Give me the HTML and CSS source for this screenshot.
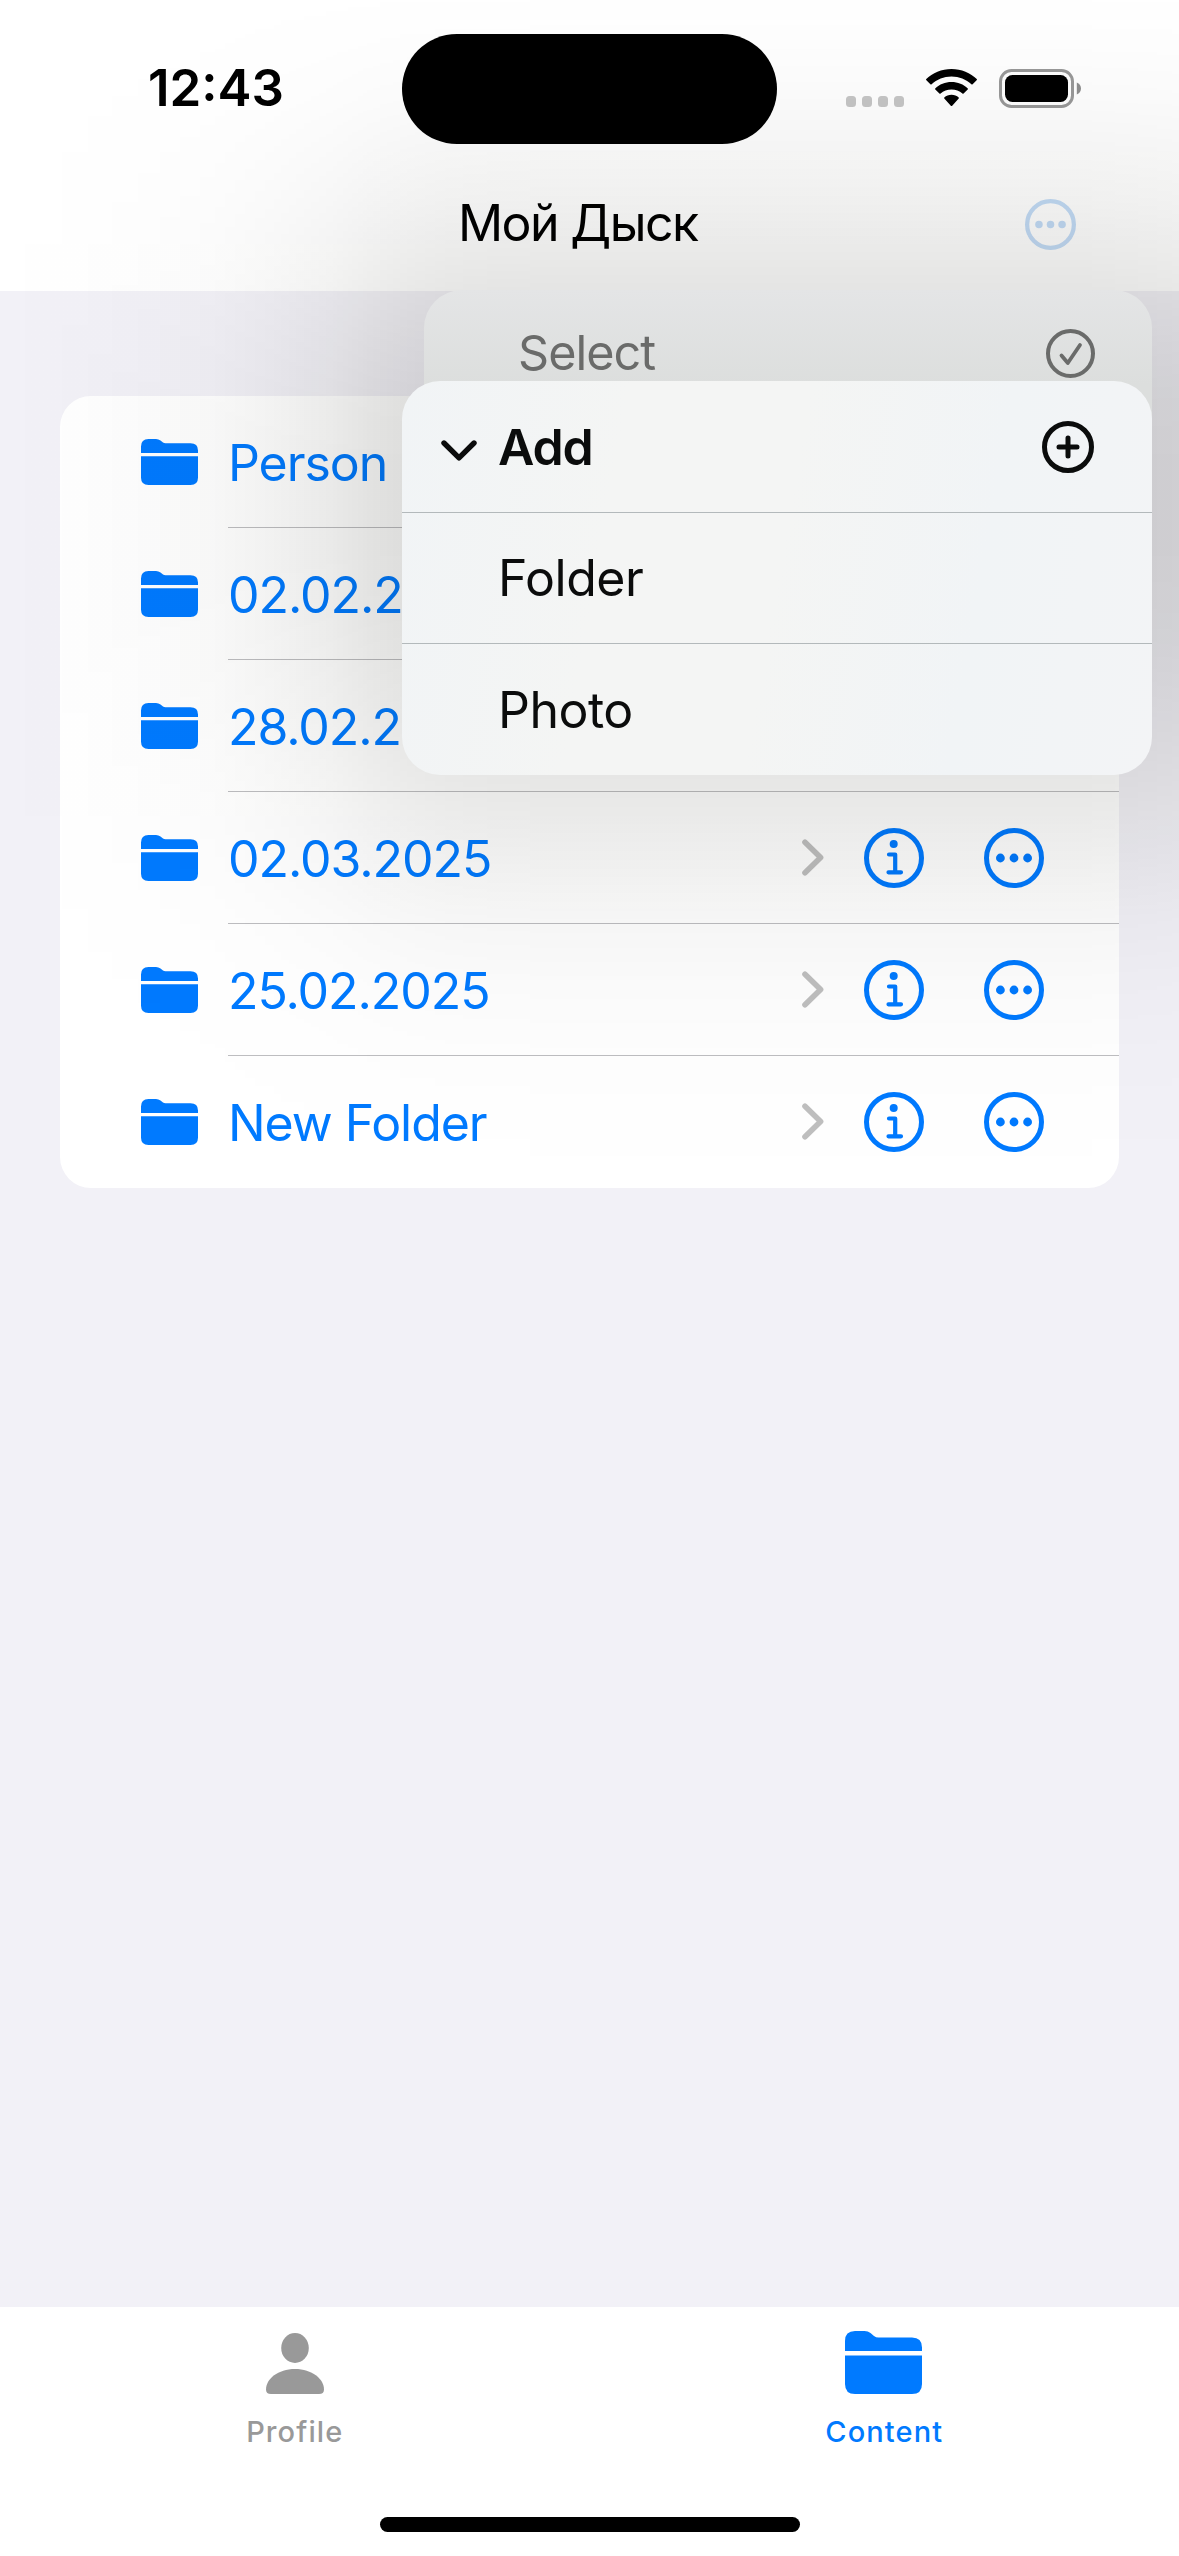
FILE: index.html
```
<!DOCTYPE html>
<html lang="en">
<head>
<meta charset="utf-8">
<title>Мой Дыск</title>
<link rel="stylesheet" href="styles.css">
</head>
<body>
<svg class="defs" aria-hidden="true">
  <symbol id="folder" viewBox="0 0 57 46">
    <path d="M0 14V7.500Q0 0 7.500 0H15Q17.500 0 19.500 1.600L22 3.600Q23 4.300 24.500 4.300H49.500Q57 4.300 57 11.500V14Z"/>
    <path d="M0 17.300H57V38.500Q57 46 49.500 46H7.500Q0 46 0 38.500Z"/>
  </symbol>
  <symbol id="folder-tab" viewBox="0 0 77 63">
    <path d="M0 20V10Q0 0 10 0H19.500Q23 0 25.500 2L29 4.900Q31 6.500 33.500 6.500H67Q77 6.500 77 16.500V20Z"/>
    <path d="M0 24.500H77V53Q77 63 67 63H10Q0 63 0 53Z"/>
  </symbol>
  <symbol id="chevron" viewBox="0 0 22 37">
    <path d="M3 3.200L18.600 18.500L3 33.800" fill="none" stroke="currentColor" stroke-width="5.600" stroke-linecap="round" stroke-linejoin="round"/>
  </symbol>
  <symbol id="info" viewBox="0 0 60 60">
    <circle cx="30" cy="30" r="27.500" fill="none" stroke="currentColor" stroke-width="5"/>
    <circle cx="29.700" cy="16" r="4"/>
    <path d="M25 26.500H31.200V44.300M24.500 44.300H37" fill="none" stroke="currentColor" stroke-width="4.200" stroke-linecap="round" stroke-linejoin="round"/>
  </symbol>
  <symbol id="more" viewBox="0 0 60 60">
    <circle cx="30" cy="30" r="27.500" fill="none" stroke="currentColor" stroke-width="5"/>
    <circle cx="16.400" cy="30" r="4.400"/><circle cx="30" cy="30" r="4.400"/><circle cx="43.600" cy="30" r="4.400"/>
  </symbol>
</svg>
<div class="screen">
  <header class="top">
    <div class="status">
      <div class="status-side"><span class="time">12:43</span></div>
      <div class="island"></div>
      <div class="status-side status-icons">
        <span class="cell"><i></i><i></i><i></i><i></i></span>
        <svg class="wifi" viewBox="0 0 51 38">
          <path d="M25.500 0C35.400 0 44.400 4 51 10.300Q51 10.800 50.600 11.300L46.600 15.300Q46 15.800 45.400 15.300C40.100 10.400 33.200 7.500 25.500 7.500S10.900 10.400 5.600 15.300Q5 15.800 4.400 15.300L.4 11.300Q0 10.800 0 10.300C6.600 4 15.600 0 25.500 0Z"/>
          <path d="M25.500 13.100C31.800 13.100 37.500 15.500 41.800 19.400Q42.200 19.900 41.700 20.500L37.600 24.600Q37 25 36.400 24.600C33.500 22.100 29.700 20.600 25.500 20.600S17.500 22.100 14.600 24.600Q14 25 13.400 24.600L9.300 20.500Q8.800 19.900 9.200 19.400C13.500 15.500 19.200 13.100 25.500 13.100Z"/>
          <path d="M25.500 25.700C28.300 25.700 30.800 26.700 32.700 28.400Q33.200 29 32.700 29.500L26.200 36.800Q25.500 37.400 24.800 36.800L18.300 29.500Q17.800 29 18.300 28.400C20.200 26.700 22.700 25.700 25.500 25.700Z"/>
        </svg>
        <svg class="battery" viewBox="0 0 82 39">
          <rect x="1.500" y="1.500" width="72" height="36" rx="11" fill="none" stroke="#999" stroke-width="3"/>
          <rect x="6" y="6" width="63" height="27" rx="7.500"/>
          <path d="M77.800 13.500C80.300 14.500 82 16.800 82 19.500S80.300 24.500 77.800 25.500Z" fill="#8f8f8f"/>
        </svg>
      </div>
    </div>
    <nav class="nav">
      <span class="title">Мой Дыск</span>
      <svg class="nav-more" viewBox="0 0 60 60"><use href="#more"/></svg>
    </nav>
  </header>
  <main class="content">
    <ul class="list">
      <li class="row"><svg class="folder"><use href="#folder"/></svg><div class="cell-body"><span class="name">Person</span></div></li>
      <li class="row"><svg class="folder"><use href="#folder"/></svg><div class="cell-body"><span class="name">02.02.2025</span></div></li>
      <li class="row"><svg class="folder"><use href="#folder"/></svg><div class="cell-body"><span class="name">28.02.2025</span></div></li>
      <li class="row"><svg class="folder"><use href="#folder"/></svg><div class="cell-body"><span class="name">02.03.2025</span><svg class="chev"><use href="#chevron"/></svg><svg class="act"><use href="#info"/></svg><svg class="act"><use href="#more"/></svg></div></li>
      <li class="row"><svg class="folder"><use href="#folder"/></svg><div class="cell-body"><span class="name">25.02.2025</span><svg class="chev"><use href="#chevron"/></svg><svg class="act"><use href="#info"/></svg><svg class="act"><use href="#more"/></svg></div></li>
      <li class="row"><svg class="folder"><use href="#folder"/></svg><div class="cell-body"><span class="name">New Folder</span><svg class="chev"><use href="#chevron"/></svg><svg class="act"><use href="#info"/></svg><svg class="act"><use href="#more"/></svg></div></li>
    </ul>
  </main>
  <footer class="tabs">
    <div class="tab-items">
      <div class="tab"><svg class="person" viewBox="0 0 58 62"><ellipse cx="29" cy="15" rx="13.800" ry="15"/><path d="M5 61Q0 61 0 56.500C0 46 12 36 29 36S58 46 58 56.500Q58 61 53 61Z"/></svg><span class="tab-label">Profile</span></div>
      <div class="tab tab-on"><svg class="folder-big"><use href="#folder-tab"/></svg><span class="tab-label">Content</span></div>
    </div>
    <div class="home"></div>
  </footer>
  <div class="menu-shadow"></div>
  <div class="menus">
    <div class="menu-back">
      <span class="select">Select</span>
      <svg class="check" viewBox="0 0 49 49"><circle cx="24.500" cy="24.500" r="22.500" fill="none" stroke="currentColor" stroke-width="4"/><path d="M15.500 26.500L21.800 34L34 16" fill="none" stroke="currentColor" stroke-width="3.800" stroke-linecap="round" stroke-linejoin="round"/></svg>
    </div>
    <div class="menu">
      <div class="item item-head"><svg class="down" viewBox="0 0 36 21"><path d="M3 3L18 17.800L33 3" fill="none" stroke="currentColor" stroke-width="5.400" stroke-linecap="round" stroke-linejoin="round"/></svg><span class="label">Add</span><svg class="plus" viewBox="0 0 52 52"><circle cx="26" cy="26" r="23.500" fill="none" stroke="currentColor" stroke-width="5"/><path d="M26 17V35M17 26H35" stroke="currentColor" stroke-width="5" stroke-linecap="round"/></svg></div>
      <div class="item"><span class="label">Folder</span></div>
      <div class="item"><span class="label">Photo</span></div>
    </div>
  </div>
</div>
</body>
</html>
```
FILE: styles.css
```
* { box-sizing: border-box; }
body {
  margin: 0;
  font-family: Inter, "Noto Sans", sans-serif;
  font-size: 50px;
  line-height: 60px;
  color: #000;
}
svg { display: block; flex: none; fill: currentColor; }
.defs { position: absolute; width: 0; height: 0; }

.screen {
  position: relative;
  display: flex;
  flex-direction: column;
  width: 1179px;
  height: 2556px;
  overflow: hidden;
  background: #f2f1f7;
}

/* Header */
.top { height: 291px; background: #fff; }
.status {
  display: grid;
  grid-template-columns: 402px 375px 1fr;
  height: 158px;
  padding-top: 34px;
}
.status-side { height: 109px; display: flex; align-items: center; }
.time { padding: 0 0 1px 148px; font-size: 51px; font-weight: 600; }
.island { height: 110px; border-radius: 55px; background: #000; }
.status-icons { padding-left: 69px; }
.cell { display: flex; gap: 6px; margin: 26px 22px 0 0; }
.cell i { width: 10px; height: 11px; border-radius: 3.500px; background: #c6c6c6; }
.wifi { width: 51px; height: 38px; margin: 0 22px 1px 0; }
.battery { width: 82px; height: 39px; margin-bottom: 1px; }
.nav {
  display: flex;
  align-items: center;
  justify-content: space-between;
  height: 133px;
  padding: 0 103px 0 458px;
}
.title { padding-bottom: 3px; letter-spacing: -1.600px; }
.nav-more { width: 51px; height: 51px; color: #c3dcf7; }

/* Folder list */
.content { flex: 1; padding: 105px 60px 0; }
.list {
  margin: 0;
  padding: 0;
  list-style: none;
  border-radius: 31px;
  background: #fff;
  color: #007aff;
  overflow: hidden;
}
.row { display: flex; align-items: center; height: 132px; padding-left: 81px; }
.folder { width: 57px; height: 46px; margin-right: 30px; }
.cell-body {
  display: flex;
  flex: 1;
  align-items: center;
  height: 132px;
  padding-right: 75px;
  border-bottom: 1px solid #bebec1;
}
.row:last-child .cell-body { border-bottom-color: transparent; }
.name { flex: 1; padding-top: 2px; letter-spacing: -1.050px; }
.chev { width: 22px; height: 37px; margin-right: 40px; color: #bfbfbf; }
.act { width: 60px; height: 60px; }
.act + .act { margin-left: 60px; }

/* Tab bar */
.tabs { height: 249px; background: #fff; }
.tab-items { display: grid; grid-template-columns: 1fr 1fr; height: 210px; padding-top: 24px; }
.tab { display: flex; flex-direction: column; align-items: center; color: #999; }
.tab-on { color: #007aff; }
.person { width: 58px; height: 62px; margin: 2px 0 19px; }
.folder-big { width: 77px; height: 63px; margin: 0 1px 20px 0; }
.tab-label { font-size: 29px; line-height: 36px; font-weight: 500; letter-spacing: 1.100px; }
.home { width: 420px; height: 15px; margin: 0 auto; border-radius: 8px; background: #000; }

/* Wide soft shadow around the popup: horizontal falloff times vertical falloff */
.menu-shadow {
  position: absolute;
  inset: 0 0 auto;
  height: 1200px;
  background: linear-gradient(to right,
    rgba(10, 10, 0, .001) 0, rgba(10, 10, 0, .004) 50px, rgba(10, 10, 0, .010) 100px,
    rgba(10, 10, 0, .019) 150px, rgba(10, 10, 0, .032) 210px, rgba(10, 10, 0, .053) 270px,
    rgba(10, 10, 0, .088) 330px, rgba(10, 10, 0, .118) 370px, rgba(10, 10, 0, .141) 410px,
    rgba(10, 10, 0, .155) 450px, rgba(10, 10, 0, .163) 500px, rgba(10, 10, 0, .167) 560px,
    rgba(10, 10, 0, .167) 1080px, rgba(10, 10, 0, .157) 1150px, rgba(10, 10, 0, .148) 1179px);
  -webkit-mask-image: linear-gradient(
    rgba(0, 0, 0, .01) 0, rgba(0, 0, 0, .05) 45px, rgba(0, 0, 0, .13) 100px,
    rgba(0, 0, 0, .23) 145px, rgba(0, 0, 0, .37) 200px, rgba(0, 0, 0, .50) 245px,
    rgba(0, 0, 0, .64) 290px, rgba(0, 0, 0, .80) 340px, rgba(0, 0, 0, .94) 400px,
    #000 470px, #000 540px, rgba(0, 0, 0, .93) 620px, rgba(0, 0, 0, .78) 700px,
    rgba(0, 0, 0, .58) 785px, rgba(0, 0, 0, .39) 858px, rgba(0, 0, 0, .22) 920px,
    rgba(0, 0, 0, .12) 980px, rgba(0, 0, 0, .055) 1050px, rgba(0, 0, 0, .015) 1130px, transparent 1200px);
  mask-image: linear-gradient(
    rgba(0, 0, 0, .01) 0, rgba(0, 0, 0, .05) 45px, rgba(0, 0, 0, .13) 100px,
    rgba(0, 0, 0, .23) 145px, rgba(0, 0, 0, .37) 200px, rgba(0, 0, 0, .50) 245px,
    rgba(0, 0, 0, .64) 290px, rgba(0, 0, 0, .80) 340px, rgba(0, 0, 0, .94) 400px,
    #000 470px, #000 540px, rgba(0, 0, 0, .93) 620px, rgba(0, 0, 0, .78) 700px,
    rgba(0, 0, 0, .58) 785px, rgba(0, 0, 0, .39) 858px, rgba(0, 0, 0, .22) 920px,
    rgba(0, 0, 0, .12) 980px, rgba(0, 0, 0, .055) 1050px, rgba(0, 0, 0, .015) 1130px, transparent 1200px);
}

/* Popup menu */
.menus { position: absolute; left: 402px; top: 290px; width: 750px; height: 485px; }
.menu-back {
  display: flex;
  justify-content: space-between;
  height: 150px;
  margin-left: 22px;
  padding: 33px 57px 0 94px;
  border-radius: 38px 38px 0 0;
  background: linear-gradient(#e4e5e6, #dcdedd 95px);
  color: #6a6b6a;
}
.select { font-size: 48.500px; letter-spacing: -.950px; }
.check { width: 49px; height: 49px; margin-top: 6px; }
.menu {
  position: relative;
  margin-top: -59px;
  border-radius: 38px;
  overflow: hidden;
  background: linear-gradient(100deg, #f1f4f6, #f4f5f4 28%, #f4f5f4 50%, #f1f4f6 75%, #f3f4f6);
  color: #0b0c0c;
}
.item { display: flex; align-items: center; height: 131px; padding-left: 96px; letter-spacing: -.500px; }
.item + .item { border-top: 1px solid #b3b9bb; }
.item:last-child { height: 132px; }
.item-head { padding: 0 58px 0 39px; font-weight: 600; letter-spacing: -1.200px; }
.down { width: 36px; height: 21px; margin: 7px 21px 0 0; }
.plus { width: 52px; height: 52px; margin-left: auto; }
```
